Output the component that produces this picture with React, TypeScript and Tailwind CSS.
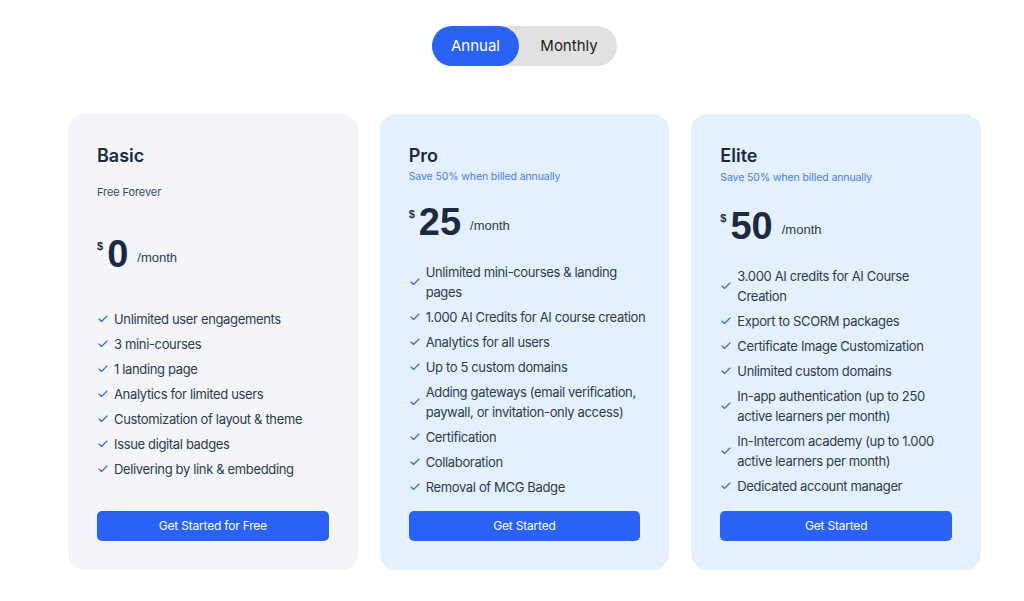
import React from 'react';
import { Check } from 'lucide-react';

type Plan = {
  name: string;
  note: string;
  noteBlue: boolean;
  price: string;
  cta: string;
  bg: string;
  features: string[];
  noteMt: string;
  priceMt: string;
  listMt: string;
};

// line breaks follow the original layout
const plans: Plan[] = [
  {
    name: 'Basic',
    note: 'Free Forever',
    noteBlue: false,
    price: '0',
    cta: 'Get Started for Free',
    bg: 'bg-[#f3f5f8]',
    noteMt: 'mt-[17px]',
    priceMt: 'mt-[33px]',
    listMt: 'mt-[33px]',
    features: [
      'Unlimited user engagements',
      '3 mini-courses',
      '1 landing page',
      'Analytics for limited users',
      'Customization of layout & theme',
      'Issue digital badges',
      'Delivering by link & embedding',
    ],
  },
  {
    name: 'Pro',
    note: 'Save 50% when billed annually',
    noteBlue: true,
    price: '25',
    cta: 'Get Started',
    bg: 'bg-[#e4f0fd]',
    noteMt: 'mt-[2px]',
    priceMt: 'mt-[16px]',
    listMt: 'mt-[18px]',
    features: [
      'Unlimited mini-courses & landing\npages',
      '1.000 AI Credits for AI course creation',
      'Analytics for all users',
      'Up to 5 custom domains',
      'Adding gateways (email verification,\npaywall, or invitation-only access)',
      'Certification',
      'Collaboration',
      'Removal of MCG Badge',
    ],
  },
  {
    name: 'Elite',
    note: 'Save 50% when billed annually',
    noteBlue: true,
    price: '50',
    cta: 'Get Started',
    bg: 'bg-[#e4f0fd]',
    noteMt: 'mt-[3px]',
    priceMt: 'mt-[19px]',
    listMt: 'mt-[18px]',
    features: [
      '3.000 AI credits for AI Course\nCreation',
      'Export to SCORM packages',
      'Certificate Image Customization',
      'Unlimited custom domains',
      'In-app authentication (up to 250\nactive learners per month)',
      'In-Intercom academy (up to 1.000\nactive learners per month)',
      'Dedicated account manager',
    ],
  },
];

const PlanCard = ({ plan }: { plan: Plan }) => (
  <div className={`${plan.bg} h-[456px] rounded-[16px] px-[29px] pt-[30px] pb-[29px] flex flex-col`}>
    <h3 className="text-[18px] leading-6 font-semibold text-[#1b2a41]">{plan.name}</h3>
    <p
      className={`${plan.noteMt} ${
        plan.noteBlue ? 'text-[10.5px] text-[#4a7cf6]' : 'text-[11px] text-[#3b4a5c]'
      } leading-[14px] tracking-[-0.1px]`}
    >
      {plan.note}
    </p>
    <div className={`${plan.priceMt} flex items-center h-[44px]`}>
      <span className="self-start mt-[6px] text-[11px] font-semibold text-[#1b2a41] font-['Liberation_Sans',sans-serif]">
        $
      </span>
      <span className="ml-[4px] text-[38px] leading-[44px] font-semibold text-[#1b2a41] font-['Liberation_Sans',sans-serif]">
        {plan.price}
      </span>
      <span className="ml-[9px] mt-[8px] text-[13px] text-[#2c3a4f] font-['Liberation_Sans',sans-serif]">/month</span>
    </div>
    <ul className={`${plan.listMt} -mr-[12px] flex flex-col gap-[5px]`}>
      {plan.features.map((f) => (
        <li key={f} className="flex items-center gap-[5px]">
          <Check className="w-[12px] h-[12px] shrink-0 text-[#2f63f2]" strokeWidth={2.2} />
          <span className="whitespace-pre-line text-[13px] leading-5 tracking-[-0.35px] text-[#2c3a4f]">{f}</span>
        </li>
      ))}
    </ul>
    <button className="mt-auto shrink-0 h-[30px] w-full rounded-[5px] bg-[#2962f5] text-white text-[12px] tracking-[-0.2px]">
      {plan.cta}
    </button>
  </div>
);

const App = () => {
  return (
    <div className="bg-white min-h-[601px] font-['Inter',sans-serif]">
      <div className="w-[913px] ml-[68px] pt-[26px] flex flex-col items-center">
        {/* Billing toggle */}
        <div className="flex h-[40px] w-[185px] rounded-full bg-[#e1e1e1]">
          <button className="w-[87px] h-full rounded-full bg-[#2962f5] text-white text-[15px]">Annual</button>
          <button className="flex-1 h-full pl-[2px] text-[15px] text-[#1d1d1d]">Monthly</button>
        </div>

        {/* Plans */}
        <div className="mt-[48px] w-full grid grid-cols-3 gap-[22px]">
          {plans.map((p) => (
            <PlanCard key={p.name} plan={p} />
          ))}
        </div>
      </div>
    </div>
  );
};

export default App;
